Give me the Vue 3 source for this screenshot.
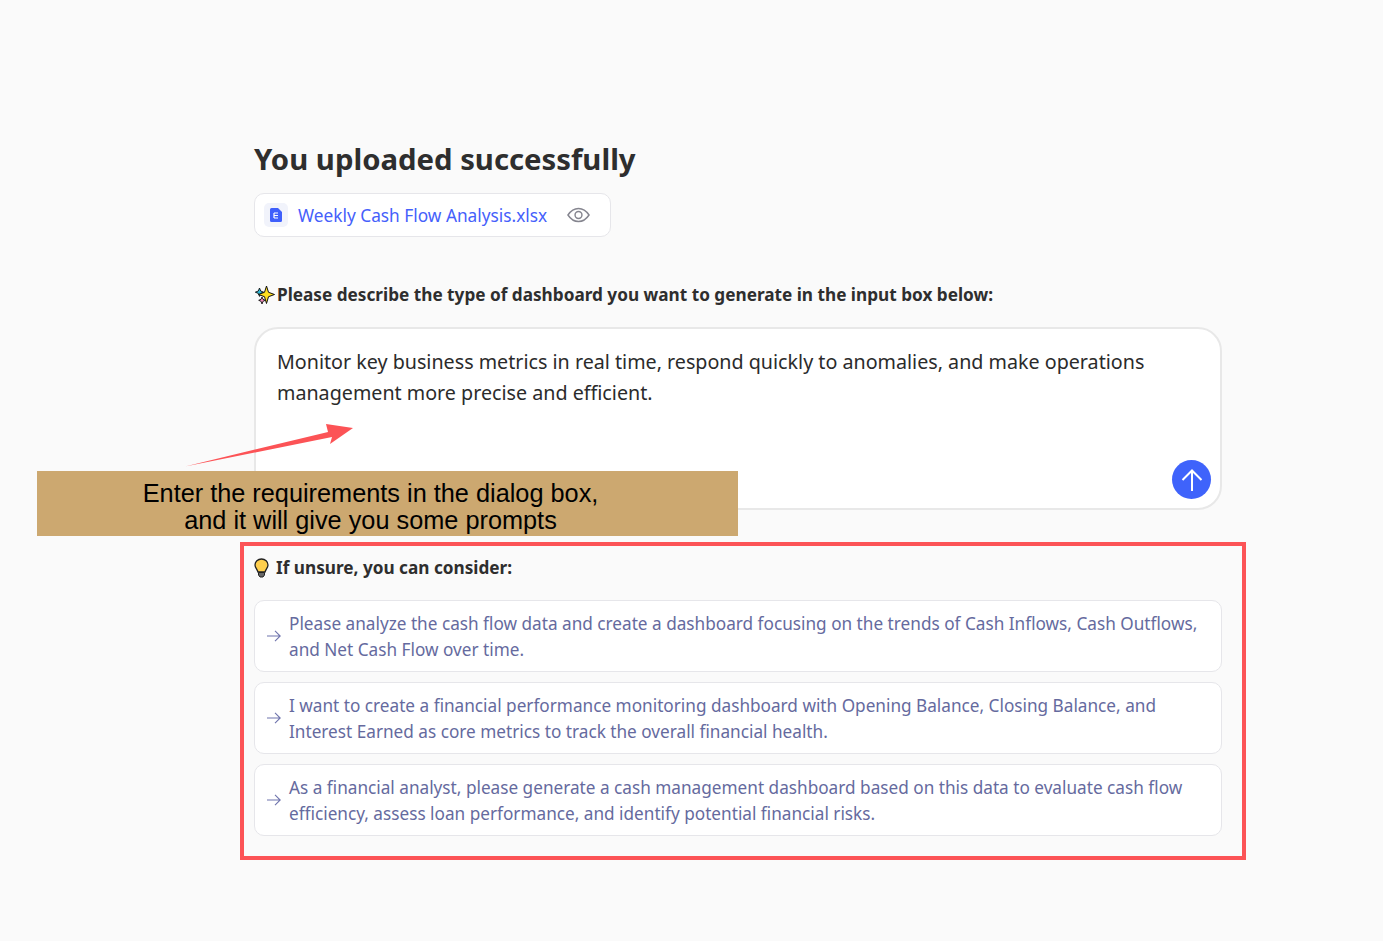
<template>
  <div class="page">
    <main class="content">
      <h1 class="title">You uploaded successfully</h1>

      <div class="file-chip">
        <span class="file-icon">
          <svg width="12" height="14" viewBox="0 0 12 14">
            <path d="M1.500 0H8l4 4v8.500a1.500 1.500 0 0 1-1.500 1.500h-9A1.500 1.500 0 0 1 0 12.500V1.500A1.500 1.500 0 0 1 1.500 0z" fill="#3f5ffb" />
            <path d="M4 5h4M4 7.500h4M4 10h4M4 5v5" stroke="#fff" stroke-width="1.200" fill="none" />
          </svg>
        </span>
        <span class="file-name">{{ fileName }}</span>
        <svg class="eye" width="23" height="16" viewBox="0 0 24 16" fill="none" stroke="#85858f" stroke-width="1.500">
          <path d="M1 8c3-4.500 6.500-6.800 11-6.800S20 3.500 23 8c-3 4.500-6.500 6.800-11 6.800S4 12.500 1 8z" />
          <circle cx="12" cy="8" r="3.600" />
        </svg>
      </div>

      <h2 class="describe">
        <svg class="sparkle" width="21" height="20" viewBox="0 0 21 20">
          <path d="M5.500 3l1.200 3 3 1.200-3 1.200-1.200 3-1.200-3-3-1.200 3-1.200z" fill="#2fb8d6" stroke="#111" stroke-width=".9" />
          <path d="M8 12l1 2.300 2.300 1-2.300 1-1 2.700-1-2.700-2.300-1 2.300-1z" fill="#f08ab8" stroke="#111" stroke-width=".9" />
          <path d="M12.500 1l2 6.300 6 2.200-6 2.200-2 6.800-2-6.800-6-2.200 6-2.200z" fill="#ffe01f" stroke="#111" stroke-width="1" />
        </svg>
        <span>Please describe the type of dashboard you want to generate in the input box below:</span>
      </h2>

      <div class="input-box">
        <p class="input-text">Monitor key business metrics in real time, respond quickly to anomalies, and make operations management more precise and efficient.</p>
        <button class="send" aria-label="Send">
          <svg width="24" height="24" viewBox="0 0 24 24" fill="none" stroke="#fff" stroke-width="2">
            <path d="M12 23V3M2.500 12L12 2.500 21.500 12" />
          </svg>
        </button>
      </div>

      <h3 class="consider">
        <svg class="bulb" width="15" height="20" viewBox="0 0 15 20">
          <path d="M7.500 1C3.800 1 1 3.700 1 7c0 2.600 2.200 4.200 3 7h7c.8-2.800 3-4.400 3-7 0-3.300-2.800-6-6.500-6z" fill="#ffcf4d" stroke="#222" stroke-width="1.300" />
          <path d="M4.500 14.500h6v2.500l-1.500 2H6l-1.500-2z" fill="#666" stroke="#222" stroke-width="1" />
        </svg>
        <span>If unsure, you can consider:</span>
      </h3>

      <ul class="prompts">
        <li v-for="item in prompts" :key="item" class="prompt">
          <svg class="arrow" width="14" height="12" viewBox="0 0 14 12" fill="none" stroke="#6f74ad" stroke-width="1.100">
            <path d="M0 6h13.200M8 .8 13.200 6 8 11.200" />
          </svg>
          <span class="prompt-text">{{ item }}</span>
        </li>
      </ul>
    </main>

    <!-- annotations pasted on top of the screenshot -->
    <svg class="note-arrow" width="172" height="46" viewBox="0 0 172 46">
      <path d="M2 43.500 L145 9 L143 1 L170 5 L147 21 L149 14 Z" fill="#fc5356" />
    </svg>
    <div class="note">Enter the requirements in the dialog box,<br />and it will give you some prompts</div>
    <div class="note-frame"></div>
  </div>
</template>

<script setup>
const fileName = 'Weekly Cash Flow Analysis.xlsx'

const prompts = [
  'Please analyze the cash flow data and create a dashboard focusing on the trends of Cash Inflows, Cash Outflows, and Net Cash Flow over time.',
  'I want to create a financial performance monitoring dashboard with Opening Balance, Closing Balance, and Interest Earned as core metrics to track the overall financial health.',
  'As a financial analyst, please generate a cash management dashboard based on this data to evaluate cash flow efficiency, assess loan performance, and identify potential financial risks.',
]
</script>

<style>
html,
body {
  margin: 0;
  background: #fafafa;
}
</style>

<style scoped>
.page {
  position: relative;
  width: 1383px;
  height: 941px;
  overflow: hidden;
  background: #fafafa;
  font-family: "Noto Sans", "Open Sans", sans-serif;
}
.content {
  box-sizing: border-box;
  width: 968px;
  margin-left: 254px;
  padding-top: 138px;
}
.title {
  margin: 0;
  font-size: 29.3px;
  line-height: 43px;
  font-weight: 700;
  color: #2e2e2e;
}
.file-chip {
  box-sizing: border-box;
  display: flex;
  align-items: center;
  width: 357px;
  height: 44px;
  margin-top: 12px;
  padding: 0 20px 0 9px;
  background: #fff;
  border: 1px solid #e6e6ea;
  border-radius: 10px;
}
.file-icon {
  display: flex;
  align-items: center;
  justify-content: center;
  width: 24px;
  height: 24px;
  background: #f1f3fb;
  border-radius: 5px;
}
.file-name {
  margin-left: 10px;
  flex: 1;
  font-size: 17.3px;
  color: #4560fb;
  white-space: nowrap;
}
.describe {
  display: flex;
  align-items: center;
  margin: 45px 0 0;
  font-size: 17.2px;
  line-height: 26px;
  font-weight: 700;
  color: #2e2e2e;
  white-space: nowrap;
}
.sparkle {
  flex: none;
  margin-right: 2px;
}
.input-box {
  box-sizing: border-box;
  position: relative;
  height: 183px;
  margin-top: 19px;
  padding: 17px 21px;
  background: #fff;
  border: 2px solid #e8e8e8;
  border-radius: 24px;
}
.input-text {
  margin: 0;
  font-size: 19.7px;
  line-height: 31px;
  color: #2b2b2b;
}
.send {
  position: absolute;
  right: 9px;
  bottom: 9px;
  display: flex;
  align-items: center;
  justify-content: center;
  width: 39px;
  height: 39px;
  padding: 0;
  background: #3f63fb;
  border: none;
  border-radius: 50%;
}
.consider {
  display: flex;
  align-items: center;
  margin: 45px 0 0;
  font-size: 17.2px;
  line-height: 26px;
  font-weight: 700;
  color: #2e2e2e;
}
.bulb {
  flex: none;
  margin-right: 7px;
}
.prompts {
  display: flex;
  flex-direction: column;
  gap: 10px;
  margin: 19px 0 0;
  padding: 0;
  list-style: none;
}
.prompt {
  box-sizing: border-box;
  display: flex;
  align-items: center;
  height: 72px;
  padding: 0 12px;
  background: #fff;
  border: 1px solid #e6e6ea;
  border-radius: 10px;
  font-size: 17.2px;
  line-height: 26px;
  color: #656a9e;
}
.prompt-text {
  padding-top: 1px;
}
.arrow {
  flex: none;
  margin-right: 8px;
}
.note-arrow {
  position: absolute;
  left: 183px;
  top: 423px;
}
.note {
  position: absolute;
  left: 37px;
  top: 471px;
  width: 701px;
  height: 65px;
  padding: 9px 34px 0 0;
  box-sizing: border-box;
  background: #cca870;
  font-family: "Liberation Sans", Arial, sans-serif;
  font-size: 25.3px;
  line-height: 27px;
  color: #000;
  text-align: center;
}
.note-frame {
  position: absolute;
  left: 240px;
  top: 542px;
  box-sizing: border-box;
  width: 1006px;
  height: 318px;
  border: 4px solid #fc5356;
}
</style>
